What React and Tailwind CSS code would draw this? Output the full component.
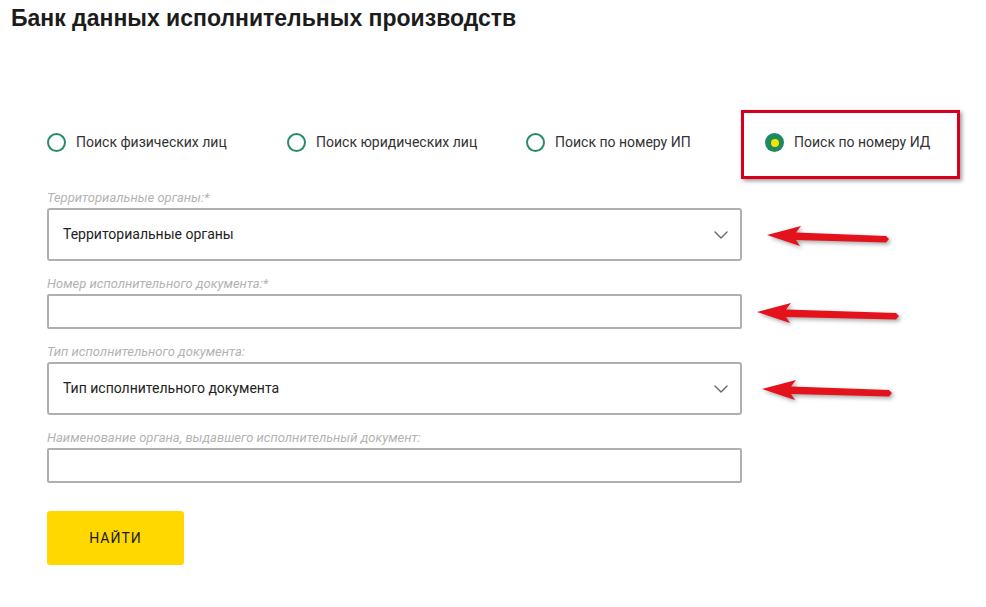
import { ChevronDown } from "lucide-react";

const RADIOS = [
  { label: "Поиск физических лиц", w: "w-[240px]" },
  { label: "Поиск юридических лиц", w: "w-[239px]" },
  { label: "Поиск по номеру ИП", w: "w-[215px]" },
];

function Radio({ label, checked }) {
  return (
    <div className="flex items-center gap-[10px]">
      {checked ? (
        <span className="flex h-[19px] w-[19px] items-center justify-center rounded-full bg-[#1f8a5f]">
          <span className="h-[8px] w-[8px] rounded-full bg-[#f5e300]" />
        </span>
      ) : (
        <span className="h-[19px] w-[19px] rounded-full border-[2.5px] border-[#2a8b6a]" />
      )}
      <span className="text-[14px] text-[#333]">{label}</span>
    </div>
  );
}

function Arrow({ className, len = 125 }) {
  const t = len - 3;
  return (
    <svg
      width={len + 4}
      height="26"
      viewBox={`0 0 ${len + 4} 26`}
      className={`drop-shadow-[2px_2px_2px_rgba(0,0,0,0.35)] ${className}`}
    >
      <polygon
        points={`1,10 35,1 30,7.5 ${t},11 ${len},14 ${t},17.5 30,15 34,21`}
        fill="#e3121b"
      />
    </svg>
  );
}

function Field({ label, children, arrow }) {
  return (
    <div>
      <p className="h-[16px] text-[13px] italic leading-[16px] text-[#b3b3b3]">{label}</p>
      <div className="mt-[2px] flex items-center">
        <div className="w-[695px]">{children}</div>
        {arrow}
      </div>
    </div>
  );
}

function Select({ text }) {
  return (
    <div className="flex h-[53px] items-center justify-between rounded-[3px] border-2 border-[#b0b0b0] pl-[14px] pr-[7px]">
      <span className="text-[14px] text-[#222]">{text}</span>
      <ChevronDown size={24} strokeWidth={1.4} className="text-[#666]" />
    </div>
  );
}

function Input() {
  return <div className="h-[35px] rounded-[2px] border-2 border-[#b0b0b0]" />;
}

export default function App() {
  return (
    <div className="min-h-screen bg-white font-['Roboto',sans-serif]">
      <h1 className="pl-[11px] pt-[3px] font-['Liberation_Sans',Arial,sans-serif] text-[23px] font-bold leading-[30px] text-[#1c1c1c]">
        Банк данных исполнительных производств
      </h1>

      <div className="ml-[47px] mt-[77px] flex items-center">
        {RADIOS.map((r) => (
          <div key={r.label} className={`${r.w} pb-[4px]`}>
            <Radio label={r.label} />
          </div>
        ))}
        <div className="flex h-[69px] w-[219px] items-center border-[3px] border-[#d6001c] pb-[4px] pl-[21px] shadow-[2px_2px_4px_rgba(0,0,0,0.4)]">
          <Radio label="Поиск по номеру ИД" checked />
        </div>
      </div>

      <div className="ml-[47px] mt-[11px] flex flex-col gap-[15px]">
        <Field label="Территориальные органы:*" arrow={<Arrow len={123} className="ml-[24px] mt-[6px]" />}>
          <Select text="Территориальные органы" />
        </Field>
        <Field label="Номер исполнительного документа:*" arrow={<Arrow len={143} className="ml-[14px] mt-[6px]" />}>
          <Input />
        </Field>
        <Field label="Тип исполнительного документа:" arrow={<Arrow len={131} className="ml-[19px] mt-[6px]" />}>
          <Select text="Тип исполнительного документа" />
        </Field>
        <Field label="Наименование органа, выдавшего исполнительный документ:">
          <Input />
        </Field>
      </div>

      <button className="ml-[47px] mt-[28px] h-[54px] w-[137px] rounded-[3px] bg-[#ffd800] text-[14px] tracking-[1px] text-[#1a1a1a]">
        НАЙТИ
      </button>
    </div>
  );
}
